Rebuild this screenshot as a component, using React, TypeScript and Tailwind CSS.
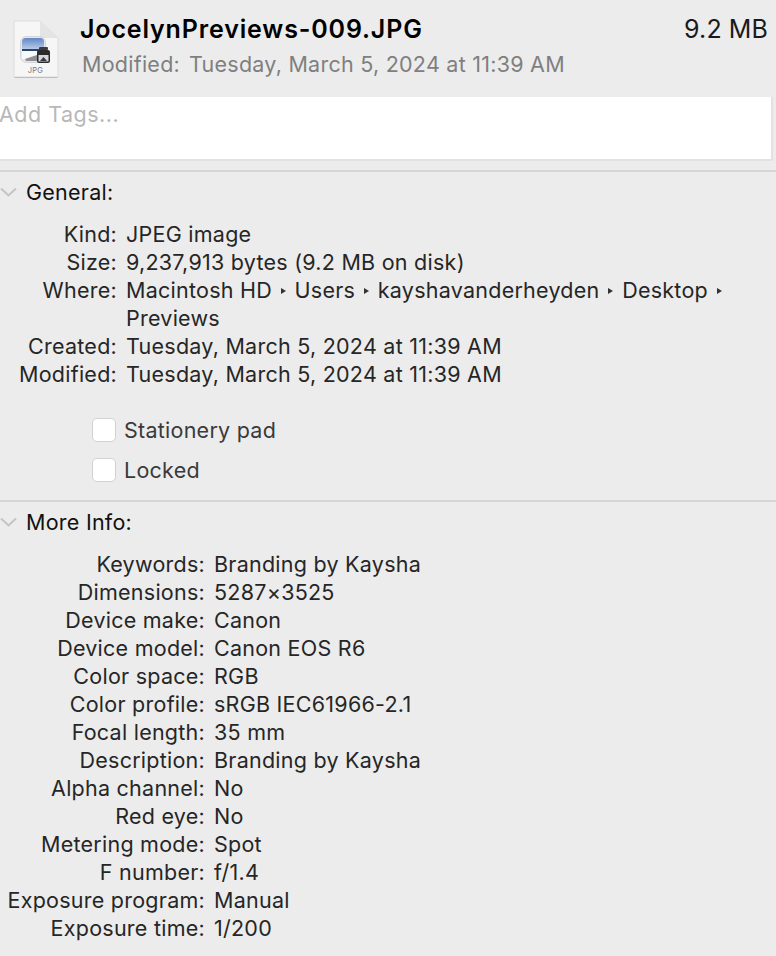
import React from 'react';

const generalRows: [string, React.ReactNode][] = [
    ['Kind:', 'JPEG image'],
    ['Size:', '9,237,913 bytes (9.2 MB on disk)'],
    ['Where:', (
        <>
            Macintosh HD <Arrow /> Users <Arrow /> kayshavanderheyden <Arrow /> Desktop <Arrow /><br />Previews
        </>
    )],
    ['Created:', 'Tuesday, March 5, 2024 at 11:39 AM'],
    ['Modified:', 'Tuesday, March 5, 2024 at 11:39 AM'],
];

const moreInfoRows: [string, string][] = [
    ['Keywords:', 'Branding by Kaysha'],
    ['Dimensions:', '5287×3525'],
    ['Device make:', 'Canon'],
    ['Device model:', 'Canon EOS R6'],
    ['Color space:', 'RGB'],
    ['Color profile:', 'sRGB IEC61966-2.1'],
    ['Focal length:', '35 mm'],
    ['Description:', 'Branding by Kaysha'],
    ['Alpha channel:', 'No'],
    ['Red eye:', 'No'],
    ['Metering mode:', 'Spot'],
    ['F number:', 'f/1.4'],
    ['Exposure program:', 'Manual'],
    ['Exposure time:', '1/200'],
];

function Arrow() {
    return <span className="inline-block align-middle mx-[2.5px] w-0 h-0 border-y-[3.5px] border-y-transparent border-l-[5px] border-l-[#333] -mt-[2px]"></span>;
}

function Chevron() {
    return (
        <svg width="17" height="10" viewBox="0 0 17 10" fill="none" className="shrink-0">
            <path d="M1 1.5 L8.5 8.5 L16 1.5" stroke="#c4c4c4" strokeWidth="2" />
        </svg>
    );
}

function FileIcon() {
    return (
        <svg width="46" height="58" viewBox="0 0 46 58">
            <defs>
                <linearGradient id="sky" x1="0" y1="0" x2="0" y2="1">
                    <stop offset="0" stopColor="#5f86c6" />
                    <stop offset="1" stopColor="#b7cbe6" />
                </linearGradient>
            </defs>
            <path d="M1 1 H27 L45 18 V56 Q45 57 44 57 H2 Q1 57 1 56 Z" fill="#f6f6f6" stroke="#dcdcdc" />
            <path d="M1.5 57.5 H44.5" stroke="#bdbdbd" />
            <path d="M27 1 L45 18 H30 Q27 18 27 15 Z" fill="#e4e4e4" />
            <rect x="7.5" y="16.5" width="25" height="26" rx="6" fill="#e6e8ec" stroke="#d5d5d5" />
            <path d="M9 29 V22 Q9 18 13 18 H27 Q31 18 31 22 V29 Z" fill="url(#sky)" />
            <rect x="9" y="29" width="22" height="2" fill="#2c4468" />
            <path d="M9 31 H24 V35 L12 39 H9 Z" fill="#f7f8fa" />
            <path d="M12 39 L24 35 V41 H13 Z" fill="#8d8f94" />
            <rect x="24" y="30" width="13" height="13" rx="2" fill="#2b2b2d" />
            <rect x="26" y="27" width="9" height="3" rx="1" fill="#3c3c3e" />
            <rect x="25.5" y="35" width="10" height="6.5" fill="#d4d6da" />
            <path d="M27 41 L30.5 37 L34 41 Z" fill="#3a3a3c" />
            <text x="22.5" y="52.5" fontSize="7.5" textAnchor="middle" fill="#777" fontFamily="Inter, sans-serif">JPG</text>
        </svg>
    );
}

function Row({ label, value, labelWidth }: { label: string; value: React.ReactNode; labelWidth: string }) {
    return (
        <div className="flex gap-[9px] leading-[28px]">
            <div className={`${labelWidth} shrink-0 text-right text-[#262626]`}>{label}</div>
            <div className="text-[#262626]">{value}</div>
        </div>
    );
}

function Checkbox({ label }: { label: string }) {
    return (
        <div className="flex items-center gap-[8px] h-[24px]">
            <div className="w-[24px] h-[24px] rounded-[5px] bg-white border border-[#d2d2d2]"></div>
            <span className="text-[#3a3a3a]">{label}</span>
        </div>
    );
}

export default function App() {
    return (
        <div className="w-[776px] h-[956px] overflow-hidden bg-[#ececec] text-[21.5px] tracking-[0.25px] font-['Inter',sans-serif]">
            {/* File header */}
            <div className="h-[97px] flex pr-[8px]">
                <div className="pl-[13px] pt-[20px] w-[80px] shrink-0">
                    <FileIcon />
                </div>
                <div className="flex-1 pt-[14px]">
                    <div className="flex justify-between leading-[30px]">
                        <span className="font-semibold text-[25px] tracking-[0.85px] text-black">JocelynPreviews-009.JPG</span>
                        <span className="text-[25px] tracking-[0.1px] text-[#1a1a1a]">9.2 MB</span>
                    </div>
                    <div className="mt-[6px] ml-[2px] flex gap-[9px] leading-[28px] text-[#7f7f7f]">
                        <span>Modified:</span>
                        <span>Tuesday, March 5, 2024 at 11:39 AM</span>
                    </div>
                </div>
            </div>

            {/* Tags */}
            <div className="w-[774px] h-[64px] bg-white border-b-2 border-r-2 border-[#e2e2e2] leading-[34px] tracking-[0.5px] text-[#b8b8b8] -ml-[1px]">
                Add Tags...
            </div>

            {/* General */}
            <div className="mt-[9px] border-t-2 border-[#d6d6d6] pt-[6px]">
                <div className="flex items-center gap-[9px] h-[28px] text-[#111]">
                    <Chevron />
                    <span>General:</span>
                </div>
                <div className="mt-[14px]">
                    {generalRows.map(([label, value]) => (
                        <Row key={label} label={label} value={value} labelWidth="w-[117px]" />
                    ))}
                </div>
                <div className="mt-[30px] ml-[92px] flex flex-col gap-[16px]">
                    <Checkbox label="Stationery pad" />
                    <Checkbox label="Locked" />
                </div>
            </div>

            {/* More Info */}
            <div className="mt-[18px] border-t-2 border-[#d6d6d6] pt-[6px]">
                <div className="flex items-center gap-[9px] h-[28px] text-[#111]">
                    <Chevron />
                    <span>More Info:</span>
                </div>
                <div className="mt-[14px]">
                    {moreInfoRows.map(([label, value]) => (
                        <Row key={label} label={label} value={value} labelWidth="w-[205px]" />
                    ))}
                </div>
            </div>
        </div>
    );
}
